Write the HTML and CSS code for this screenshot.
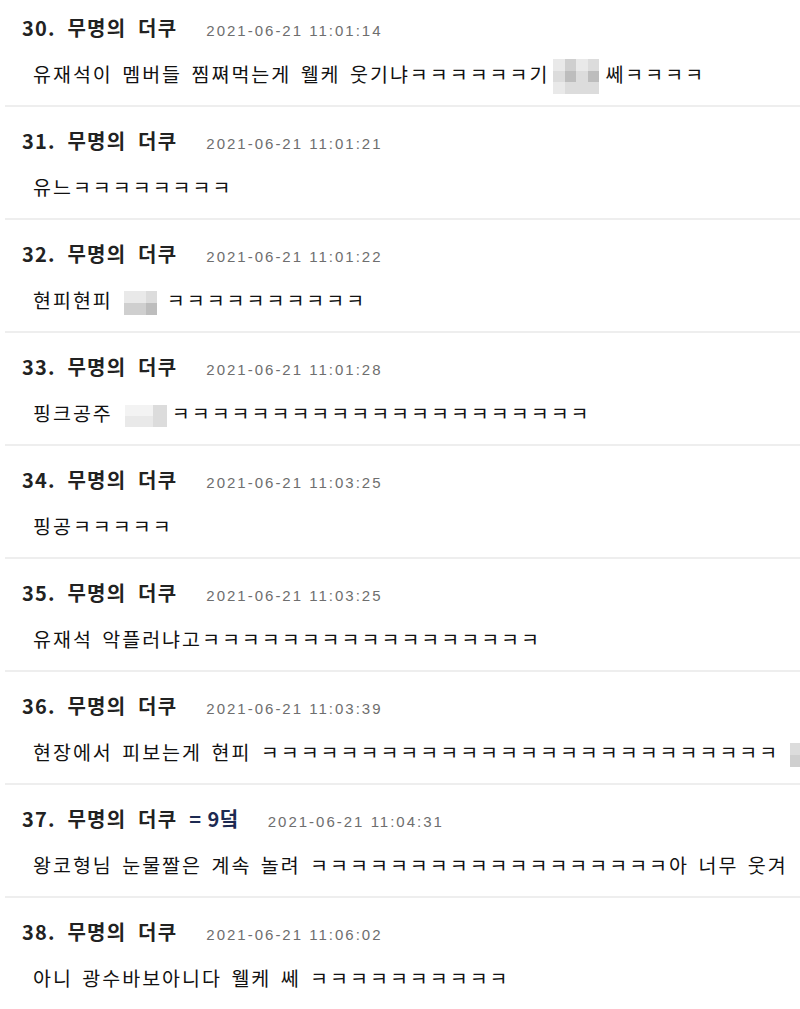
FILE: index.html
```html
<!DOCTYPE html>
<html lang="ko">
<head>
    <meta charset="UTF-8">
    <title>댓글</title>
    <link rel="stylesheet" href="styles.css">
</head>
<body>
    <div class="comments">
        <div class="comment">
            <div class="comment-head"><span class="author">30. 무명의 더쿠</span><span class="date">2021-06-21 11:01:14</span></div>
            <div class="comment-body">유재석이 멤버들 찜쪄먹는게 웰케 웃기냐ㅋㅋㅋㅋㅋㅋ기<span class="mosaic m4x3"><i class="s1"></i><i class="s3"></i><i class="s1"></i><i class="s2"></i><i class="s2"></i><i class="s4"></i><i class="s2"></i><i class="s4"></i><i class="s1"></i><i class="s2"></i><i class="s2"></i><i class="s2"></i></span>쎄ㅋㅋㅋㅋ</div>
        </div>
        <div class="comment">
            <div class="comment-head"><span class="author">31. 무명의 더쿠</span><span class="date">2021-06-21 11:01:21</span></div>
            <div class="comment-body">유느ㅋㅋㅋㅋㅋㅋㅋㅋ</div>
        </div>
        <div class="comment">
            <div class="comment-head"><span class="author">32. 무명의 더쿠</span><span class="date">2021-06-21 11:01:22</span></div>
            <div class="comment-body">현피현피<span class="mosaic m3x2"><i class="s1"></i><i class="s1"></i><i class="s2"></i><i class="s3"></i><i class="s3"></i><i class="s4"></i></span>ㅋㅋㅋㅋㅋㅋㅋㅋㅋㅋ</div>
        </div>
        <div class="comment">
            <div class="comment-head"><span class="author">33. 무명의 더쿠</span><span class="date">2021-06-21 11:01:28</span></div>
            <div class="comment-body">핑크공주<span class="mosaic m3x2 wide"><i class="s0"></i><i class="s0"></i><i class="s2"></i><i class="s1"></i><i class="s1"></i><i class="s2"></i></span>ㅋㅋㅋㅋㅋㅋㅋㅋㅋㅋㅋㅋㅋㅋㅋㅋㅋㅋㅋㅋㅋ</div>
        </div>
        <div class="comment">
            <div class="comment-head"><span class="author">34. 무명의 더쿠</span><span class="date">2021-06-21 11:03:25</span></div>
            <div class="comment-body">핑공ㅋㅋㅋㅋㅋ</div>
        </div>
        <div class="comment">
            <div class="comment-head"><span class="author">35. 무명의 더쿠</span><span class="date">2021-06-21 11:03:25</span></div>
            <div class="comment-body">유재석 악플러냐고ㅋㅋㅋㅋㅋㅋㅋㅋㅋㅋㅋㅋㅋㅋㅋㅋㅋ</div>
        </div>
        <div class="comment">
            <div class="comment-head"><span class="author">36. 무명의 더쿠</span><span class="date">2021-06-21 11:03:39</span></div>
            <div class="comment-body">현장에서 피보는게 현피 ㅋㅋㅋㅋㅋㅋㅋㅋㅋㅋㅋㅋㅋㅋㅋㅋㅋㅋㅋㅋㅋㅋㅋㅋㅋㅋ<span class="mosaic m3x2"><i class="s2"></i><i class="s1"></i><i class="s1"></i><i class="s3"></i><i class="s2"></i><i class="s2"></i></span></div>
        </div>
        <div class="comment">
            <div class="comment-head"><span class="author">37. 무명의 더쿠 <span class="nick">= 9덬</span></span><span class="date">2021-06-21 11:04:31</span></div>
            <div class="comment-body">왕코형님 눈물짤은 계속 놀려 ㅋㅋㅋㅋㅋㅋㅋㅋㅋㅋㅋㅋㅋㅋㅋㅋㅋㅋ아 너무 웃겨</div>
        </div>
        <div class="comment">
            <div class="comment-head"><span class="author">38. 무명의 더쿠</span><span class="date">2021-06-21 11:06:02</span></div>
            <div class="comment-body">아니 광수바보아니다 웰케 쎄 ㅋㅋㅋㅋㅋㅋㅋㅋㅋㅋ</div>
        </div>
    </div>
</body>
</html>
```

FILE: styles.css
```css
body {
    margin: 0;
    background: #fff;
    font-family: "Noto Sans CJK KR", "Noto Sans", sans-serif;
}

.comments {
    margin: -6px 0 0 5px;
}

.comment {
    padding: 20px 0 17px 17px;
    border-bottom: 2px solid #eeeeee;
    white-space: nowrap;
    overflow: hidden;
}

.comment-head {
    display: flex;
    align-items: baseline;
    height: 28px;
    line-height: 28px;
}

.author {
    font-size: 20px;
    font-weight: 700;
    color: #222;
    letter-spacing: 1.2px;
    word-spacing: 5px;
}

.nick {
    color: #1d2a52;
    letter-spacing: 0.5px;
    word-spacing: 0;
}

.date {
    margin-left: 29px;
    font-family: "Liberation Sans", Arial, sans-serif;
    font-size: 15px;
    letter-spacing: 2px;
    color: #6e6e6e;
}

.comment-body {
    margin-top: 18px;
    padding-left: 11px;
    font-size: 19.5px;
    line-height: 28px;
    color: #111;
    letter-spacing: 2px;
    word-spacing: 2px;
}

/* 모자이크 */
.mosaic {
    display: inline-grid;
    vertical-align: middle;
    margin: -6px 6px;
}

.mosaic i {
    display: block;
}

.m4x3 {
    grid-template-columns: repeat(4, 11.5px);
    grid-template-rows: repeat(3, 11.5px);
    margin-left: 4px;
}

.m3x2 {
    grid-template-columns: repeat(3, 11px);
    grid-template-rows: repeat(2, 12px);
    margin-left: 11px;
    margin-right: 10px;
}

.m3x2.wide {
    grid-template-columns: repeat(3, 14px);
    grid-template-rows: repeat(2, 11px);
    margin-left: 12px;
    margin-right: 5px;
}

.s0 { background: #f3f3f3; }
.s1 { background: #e9e9e9; }
.s2 { background: #dcdcdc; }
.s3 { background: #cfcfcf; }
.s4 { background: #bdbdbd; }
```
